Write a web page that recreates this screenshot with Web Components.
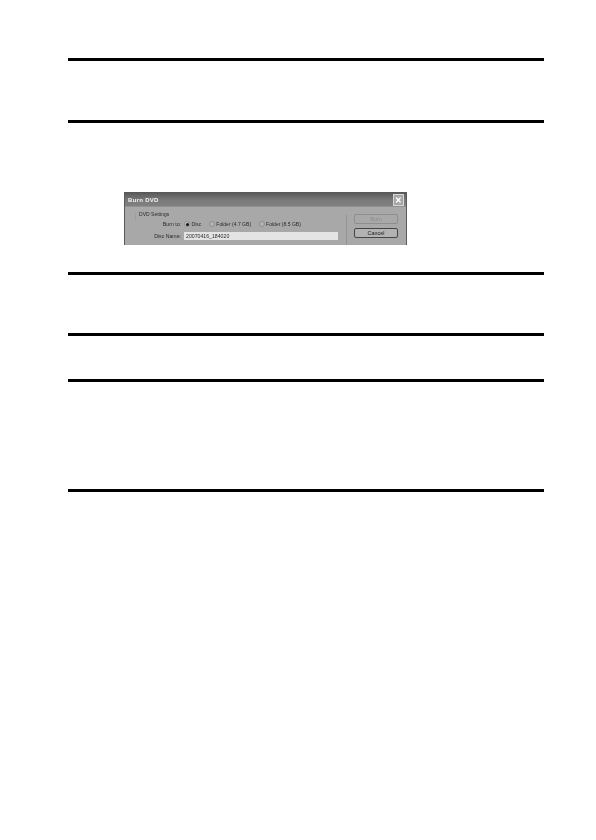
<!DOCTYPE html>
<html><head><meta charset="utf-8"><title>Burn DVD</title>
<style>html,body{margin:0;background:#fff}</style></head>
<body>
<manual-page>
  <page-rule style="--after:59px"></page-rule>
  <page-rule style="--after:69px"></page-rule>
  <burn-dialog style="--after:27px"></burn-dialog>
  <page-rule style="--after:58px"></page-rule>
  <page-rule style="--after:43px"></page-rule>
  <page-rule style="--after:107px"></page-rule>
  <page-rule></page-rule>
</manual-page>
<script>
function def(name, css, html){
  customElements.define(name, class extends HTMLElement{
    constructor(){super();this.attachShadow({mode:'open'}).innerHTML='<style>'+css+'</style>'+html;}
  });
}
def('manual-page',':host{display:flex;flex-direction:column;box-sizing:border-box;width:596px;height:840px;padding:58px 52px 0 68px;background:#fff}','<slot></slot>');
def('page-rule',':host{display:block;height:3px;background:#000;margin-bottom:var(--after,0);flex:none}','');
def('dlg-radio',`:host{display:inline-flex;align-items:center;gap:1.5px;font-size:5px;letter-spacing:.02px;color:#2a2a2a;white-space:nowrap}
 i{display:block;width:6px;height:6px;margin-top:1px;border-radius:50%;background:#b4b4b4;border:.5px solid #8e8e8e;box-sizing:border-box;position:relative}
 :host([on]) i{background:#c4c4c4;margin-top:0}
 :host([on]) i::after{content:"";position:absolute;left:1px;top:1px;width:3px;height:3px;border-radius:50%;background:#111}`,'<i></i><slot></slot>');
def('dlg-button',`:host{display:flex;align-items:center;justify-content:center;box-sizing:border-box;width:44px;height:10px;border-radius:2px;border:1px solid #444;background:#b2b2b2;font-size:5.4px;color:#1a1a1a}
 :host([disabled]){border-color:#8e8e8e;color:#8c8c8c;background:#a8a8a8}`,'<slot></slot>');
def('burn-dialog',`:host{display:block;margin-left:56px;width:283px;height:53px;margin-bottom:var(--after,0);font-family:"Liberation Sans",Arial,sans-serif;filter:blur(.55px);flex:none}
 .win{height:100%;display:flex;flex-direction:column;border:solid #5a5a5a;border-width:0 1px;box-sizing:border-box;background:#a8a8a8;overflow:hidden}
 .title{flex:none;height:15px;display:flex;align-items:center;justify-content:space-between;padding:0 2px 0 3px;background:linear-gradient(#565656,#7a7a7a 55%,#808080 90%,#999);color:#f4f4f4;font-size:6px;font-weight:bold;letter-spacing:.3px}
 .x{width:11px;height:12px;box-sizing:border-box;border:1px solid #d8d8d8;background:#a6a6a6;display:flex}
 .x svg{width:100%;height:100%}
 .body{flex:1;display:flex;min-height:0}
 .form{position:relative;width:221px;box-sizing:border-box;padding:3px 0 0 14px;font-size:5px;color:#2a2a2a}
 .form::before{content:"";position:absolute;left:10px;top:6px;width:1px;height:7px;background:#9c9c9c}
 .legend{height:8px;line-height:8px;letter-spacing:.02px}
 .row{display:grid;grid-template-columns:42px auto;column-gap:3px;align-items:center}
 .row.burn{height:9px;margin-top:1px}
 .row.name{height:8px;margin-top:4px}
 .lab{text-align:right;white-space:nowrap;font-size:5.2px}
 .radios{display:flex;gap:7.5px}
 .input{height:8px;width:154px;box-sizing:border-box;background:#e4e4e4;padding-left:2px;line-height:8px;font-size:5.2px;color:#2a2a2a}
 .sep{width:1px;background:#929292;margin-top:8px}
 .btns{display:flex;flex-direction:column;gap:4px;padding:7px 0 0 7px}`,
 `<div class="win">
   <div class="title"><span>Burn DVD</span><div class="x"><svg viewBox="0 0 11 12"><path d="M2.5 3 8 9M8 3 2.5 9" stroke="#fff" stroke-width="1.6" fill="none"/></svg></div></div>
   <div class="body">
    <div class="form">
      <div class="legend">DVD Settings</div>
      <div class="row burn"><span class="lab">Burn to:</span><div class="radios"><dlg-radio on>Disc</dlg-radio><dlg-radio>Folder (4.7 GB)</dlg-radio><dlg-radio>Folder (8.5 GB)</dlg-radio></div></div>
      <div class="row name"><span class="lab">Disc Name:</span><div class="input">20070416_184020</div></div>
    </div>
    <div class="sep"></div>
    <div class="btns"><dlg-button disabled>Burn</dlg-button><dlg-button>Cancel</dlg-button></div>
   </div>
  </div>`);
</script>
</body></html>
